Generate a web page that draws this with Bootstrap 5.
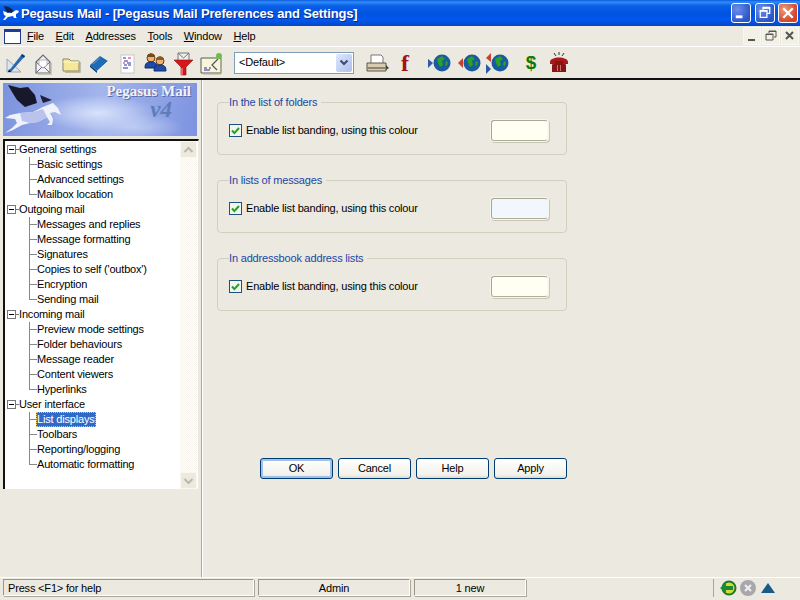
<!DOCTYPE html>
<html lang="en">
<head>
  <meta charset="UTF-8">
  <title>Pegasus Mail - [Pegasus Mail Preferences and Settings]</title>
  <link href="https://cdn.jsdelivr.net/npm/bootstrap@5.3.0/dist/css/bootstrap.min.css" rel="stylesheet">
  <style>
    html, body { height: 100%; overflow: hidden; }
    body { font-family: "Liberation Sans", Arial, sans-serif; font-size: 11px; letter-spacing: -.18px; line-height: 15px; color: #000; background: #ece9e0; }
    .app { width: 800px; height: 600px; }

    .titlebar { height: 26px; padding: 0 2px 0 2px; color: #fff; font-weight: 700; font-size: 13px; letter-spacing: -.15px;
      background: linear-gradient(#0a5be0 0, #2f8cf6 2px, #0a5fe8 6px, #0052e0 14px, #0058ee 20px, #0546c4 26px); }
    .titlebar .title { margin-left: 0; text-shadow: 1px 1px 0 #0a2a8c; }
    .win-btn { width: 20px; height: 20px; border: 1px solid #fff; border-radius: 3px; background: radial-gradient(circle at 30% 30%, #6c8fe8, #2a55c8 75%); }
    .win-btn.close { background: radial-gradient(circle at 30% 30%, #ec9a7a, #d5452a 70%); }

    .menubar { height: 21px; border-bottom: 1px solid #fff; }
    .menu-logo { width: 17px; height: 15px; margin: 0 6px 0 4px; background: #fff; border: 1px solid #1c3f94; border-top-width: 3px; }
    .menu-items { gap: 11.6px; }
    .mdi-btn { width: 18px; height: 18px; background: #f3f1e6; border: 1px solid #f8f7f0; }

    .toolbar { height: 33px; border-bottom: 2px solid #111; padding-left: 1px; }
    .tb { width: 28px; height: 26px; }
    .combo { width: 120px; height: 22px; background: #fff; border: 1px solid #7f9db9; margin: 0 9px; padding-left: 4px; }
    .combo-btn { width: 16px; height: 18px; margin: 1px; border-radius: 2px; background: linear-gradient(135deg, #dfe7fb, #aebfee); }
    .ms-globe { margin-left: 6px; }
    .ms-2px { margin-left: 2px; }

    .main { min-height: 0; }
    .sidebar { width: 202px; border-right: 1px solid #aca899; padding: 3px 0 0 3px; box-shadow: 1px 0 0 #fff; }
    .logo { position: relative; width: 194px; height: 53px; padding: 0 6px 0 0; overflow: hidden; text-align: right;
      font-family: "Liberation Serif", serif; font-weight: 700; letter-spacing: 0;
      background:
        radial-gradient(ellipse 60px 18px at 95px 30px, #d8e2fa, transparent),
        radial-gradient(ellipse 50px 14px at 130px 44px, #bccbf3, transparent),
        linear-gradient(100deg, #7b92de, #a3b5ec 50%, #7d93e0); }
    .logo .brand { color: #f1f2f6; font-size: 15px; line-height: 16px; text-shadow: 1px 1px 0 #5a6ba8; }
    .logo .ver { color: #5d7db8; font-size: 23px; line-height: 22px; font-style: italic; padding-right: 19px; }
    .logo svg { position: absolute; left: 0; top: 0; }

    .tree-box { width: 196px; height: 350px; margin-top: 3px; background: #fff; border-left: 2px solid #111; border-top: 2px solid #111; border-right: 1px solid #ece9e0; }
    .tree { padding: 1px 0 0 2px; }
    .tree ul { list-style: none; margin: 0; padding: 0; }
    .tree-row { height: 15px; white-space: nowrap; }
    .tree-group { display: flex; align-items: center; }
    .expander { width: 9px; height: 9px; border: 1px solid #777; position: relative; background: #fff; flex: none; }
    .expander::before { content: ""; position: absolute; left: 1px; right: 1px; top: 3px; height: 1px; background: #000; }
    .tree-stub { width: 3px; height: 1px; background: #777; flex: none; }
    .tree-children { margin-left: 4px !important; }
    .tree-children li { position: relative; padding-left: 26px; height: 15px; }
    .tree-children li::before { content: ""; position: absolute; left: 18px; top: 0; bottom: 0; border-left: 1px solid #888; }
    .tree-children li:last-child::before { bottom: 7px; }
    .tree-children li::after { content: ""; position: absolute; left: 18px; top: 7px; width: 8px; border-top: 1px solid #888; }
    .tree-children li span { display: inline-block; padding: 0 1px; height: 15px; margin-left: -1px; }
    .tree-children li .active { background: #316ac5; color: #fff; outline: 1px dotted #e8c860; outline-offset: -1px; }
    .scroll { width: 17px; margin: 0 1px 0 0; background: repeating-conic-gradient(#f6f4ec 0 25%, #fff 0 50%) 0 0 / 2px 2px; }
    .scroll-btn { height: 17px; background: #eceadf; border: 1px solid #f8f7f0; border-radius: 2px; }

    .content { padding: 15px 0 0 15px; width: 598px; }
    fieldset.group { width: 350px; height: 60px; border: 1px solid #d0d0bf; border-radius: 4px; padding: 0 18px 0 11px; margin: 0 0 18px 0; }
    fieldset.group legend { float: none; width: auto; font-size: 11px; line-height: 15px; color: #1a47a6; padding: 0 4px 0 0; margin: 0; }
    .group .body-row { margin-top: 10px; }
    .form-check-input.xp { width: 13px; height: 13px; margin: 0 4px 0 0; border: 1px solid #1c5180; border-radius: 0; flex: none;
      background-color: #f4f4ee; background-size: 11px 11px; opacity: 1; box-shadow: none;
      background-image: url("data:image/svg+xml,%3Csvg xmlns='http://www.w3.org/2000/svg' viewBox='0 0 11 11'%3E%3Cpath d='M2 5.5l2.4 2.6L9 3' fill='none' stroke='%2321a121' stroke-width='2'/%3E%3C/svg%3E"); }
    .swatch { width: 57px; height: 21px; margin-left: auto; border: 1px solid; border-color: #a8a796 #f8f7f0 #b0ae9c #a8a796; border-radius: 3px; box-shadow: 0 0 0 1px #f7f6ee, 1px 1px 0 1px #c8c6b4; }
    .swatch.cream { background: #fffff2; }
    .swatch.ice { background: #f2f6fd; }

    .actions { width: 307px; margin: 147px 0 0 43px; gap: 5px; }
    .btn.xp-btn { width: 73px; height: 21px; padding: 0; font-size: 11px; letter-spacing: -.18px; line-height: 19px; color: #000; border: 1px solid #003c74; border-radius: 3px; background: linear-gradient(#fff, #f2f1ea 85%, #dcd8c8); }
    .btn.xp-btn.default { box-shadow: inset 0 0 0 2px #a6bfe8; }

    .statusbar { height: 23px; border-top: 1px solid #fff; padding: 1px 0 0 3px; }
    .pane { height: 17px; line-height: 16px; border: 1px solid; border-color: #9a9788 #fff #fff #9a9788; padding: 0 4px; box-shadow: 1px 1px 0 #aca899; }
    .pane-help { width: 251px; }
    .pane-user { width: 152px; margin-left: 4px; text-align: center; }
    .pane-new { width: 112px; margin-left: 4px; text-align: center; }
    .tray { margin-left: 187px; border-left: 1px solid #aca899; height: 18px; padding-left: 5px; gap: 2px; }
  </style>
</head>
<body>
<div class="app d-flex flex-column">

  <div class="titlebar d-flex align-items-center">
    <svg width="19" height="17" viewBox="0 0 19 17"><path d="M1 6l5 2 5-1 3-2 3 1-1 2-2 1 0 3 1 1-3 0-1-2-5 1-3 3-2 0 3-4-2-1z" fill="#fff"/><path d="M2 1l5 1 4 3-1 3-5-1-2-3z" fill="#152244"/></svg>
    <div class="title">Pegasus Mail - [Pegasus Mail Preferences and Settings]</div>
    <div class="ms-auto d-flex" style="gap:3px">
      <div class="win-btn d-flex"><svg width="18" height="18" viewBox="0 0 19 19"><rect x="4" y="12" width="7" height="3" fill="#fff"/></svg></div>
      <div class="win-btn d-flex" style="margin-left:1px"><svg width="18" height="18" viewBox="0 0 19 19"><path d="M7.500 6V4h7v6h-2.500M4.500 7h7v7h-7z" fill="none" stroke="#fff" stroke-width="1.300"/><path d="M7 4h8M4 7.300h8" stroke="#fff" stroke-width="2"/></svg></div>
      <div class="win-btn close d-flex"><svg width="18" height="18" viewBox="0 0 19 19"><path d="M4.500 4.500l10 10M14.500 4.500l-10 10" stroke="#fff" stroke-width="2.400"/></svg></div>
    </div>
  </div>

  <div class="menubar d-flex align-items-center">
    <div class="menu-logo"></div>
    <div class="menu-items d-flex">
      <span><u>F</u>ile</span>
      <span><u>E</u>dit</span>
      <span><u>A</u>ddresses</span>
      <span><u>T</u>ools</span>
      <span><u>W</u>indow</span>
      <span><u>H</u>elp</span>
    </div>
    <div class="ms-auto d-flex" style="gap:1px;margin-right:1px">
      <div class="mdi-btn"><svg width="16" height="16" viewBox="0 0 16 16"><path d="M4 12h7" stroke="#555" stroke-width="2"/></svg></div>
      <div class="mdi-btn"><svg width="16" height="16" viewBox="0 0 16 16"><path d="M6 5V3h7v6h-2M3 6h7v6H3z" fill="none" stroke="#555"/><path d="M3 6.500h7M6 3.500h7" stroke="#555"/></svg></div>
      <div class="mdi-btn"><svg width="16" height="16" viewBox="0 0 16 16"><path d="M4 4l7 7M11 4l-7 7" stroke="#555" stroke-width="2"/></svg></div>
    </div>
  </div>

  <div class="toolbar d-flex align-items-center">
    <!-- compose -->
    <svg class="tb" viewBox="0 0 28 26"><path d="M6 9l14 13H6z" fill="#dfe4ee" stroke="#9aa4bc"/><path d="M7 22L21 4l3 2L10 22z" fill="#2a6ab0"/><path d="M7 22l3 0-2-3z" fill="#123"/><path d="M21 4l3 2-1 2-3-2z" fill="#113a6e"/></svg>
    <!-- read envelope -->
    <svg class="tb" viewBox="0 0 28 26"><path d="M7 12l7-7 7 7v11H7z" fill="#f2f2f4" stroke="#6a6a78" stroke-width="1.200"/><path d="M7 12l7 6 7-6M7 23l6-6M21 23l-6-6" fill="none" stroke="#6a6a78"/><path d="M10 10h8v5l-4 3-4-3z" fill="#fff" stroke="#9a9aa8" stroke-width=".7"/><path d="M22 13v11H9" fill="none" stroke="#bbb8a8" stroke-width="1.400"/></svg>
    <!-- folder -->
    <svg class="tb" viewBox="0 0 28 26"><path d="M6 9h6l2 2h8v10H6z" fill="#f5e89a" stroke="#8b8660"/><path d="M6 12h16" stroke="#fff7c8"/><path d="M23 12v10H8" fill="none" stroke="#a9a794" stroke-width="1.300"/></svg>
    <!-- address book -->
    <svg class="tb" viewBox="0 0 28 26"><path d="M5 15l10-9 8 5-11 10z" fill="#1f6ab4"/><path d="M5 15l7 6v2l-7-6z" fill="#0d3c78"/><path d="M12 21l11-10v2L12 23z" fill="#e8eef8"/><path d="M8 14l7-6" stroke="#5c9ade"/></svg>
    <!-- filter list -->
    <svg class="tb" viewBox="0 0 28 26"><rect x="8" y="5" width="13" height="18" fill="#fff" stroke="#c8c8c8"/><path d="M10 8h3M11 11h4M14 13h4M11 15h3M15 15h3M10 18h5" stroke="#2a2aa8"/><path d="M15 8h3M10 13h2" stroke="#b02a8a"/></svg>
    <!-- people -->
    <svg class="tb" viewBox="0 0 28 26"><circle cx="10" cy="8" r="4" fill="#f0b070" stroke="#5a3a10"/><path d="M6 7c0-5 8-5 8 0z" fill="#7a4a12"/><path d="M4 18c0-5 2-6 6-6s6 1 6 6z" fill="#1f4aa8" stroke="#102c70"/><circle cx="19" cy="11" r="4" fill="#f0b070" stroke="#5a3a10"/><path d="M15 10c0-5 8-5 8 0z" fill="#8a5a20"/><path d="M13 21c0-5 2-6 6-6s6 1 6 6z" fill="#1f4aa8" stroke="#102c70"/></svg>
    <!-- funnel -->
    <svg class="tb" viewBox="0 0 28 26"><path d="M9 3h11v8H9z" fill="#eee" stroke="#777"/><path d="M9 3l5.500 5L20 3" fill="none" stroke="#777"/><path d="M5 10h19l-7 7v8h-5v-8z" fill="#d81818" stroke="#8a1010" stroke-width=".6"/><path d="M12 18h2v7h-2z" fill="#f06060"/></svg>
    <!-- rules -->
    <svg class="tb" viewBox="0 0 28 26"><path d="M4 8h20v15H4z" fill="#f7f5dc" stroke="#5c5c50"/><path d="M24 9v15H6" fill="none" stroke="#b0ae9c"/><path d="M7 18h3M12 18h2M7 20h6" stroke="#2a2a98"/><path d="M21 9l-6 6 5 5" fill="none" stroke="#555" stroke-width="1.200"/><circle cx="22" cy="6" r="3" fill="#6cc04a"/></svg>

    <div class="combo d-flex align-items-center">&lt;Default&gt;
      <div class="combo-btn ms-auto d-flex align-items-center justify-content-center"><svg width="10" height="8" viewBox="0 0 10 8"><path d="M1.500 1.500L5 5l3.500-3.500" fill="none" stroke="#3c4a78" stroke-width="2"/></svg></div>
    </div>

    <!-- printer -->
    <svg class="tb" viewBox="0 0 28 26"><path d="M8 5h10l2 2v7H8z" fill="#fff" stroke="#777"/><path d="M4 13h19v8H4z" fill="#d8ccb0" stroke="#5c5648"/><path d="M4 18h19" stroke="#8e866e" stroke-width="2"/><path d="M23 15l3 3-3 2z" fill="#444"/></svg>
    <!-- font f -->
    <svg class="tb" viewBox="0 0 28 26"><text x="14" y="21" text-anchor="middle" font-family="Liberation Serif, serif" font-weight="700" font-size="24" fill="#a01414">f</text></svg>

    <svg class="tb ms-globe" viewBox="0 0 28 26"><path d="M3 9l5 4-5 5z" fill="#2c5aa8"/><circle cx="17" cy="13" r="8.500" fill="#1a5a9e"/><path d="M12 9l5-3 3 3-3 2 1 4-3 2-2-4zM21 11l2 1-1 4-2-1z" fill="#2ba02b"/></svg>
    <svg class="tb ms-2px" viewBox="0 0 28 26"><path d="M8 8l-5 5 5 5z" fill="#c84030"/><circle cx="17" cy="13" r="8.500" fill="#1a5a9e"/><path d="M12 9l5-3 3 3-3 2 1 4-3 2-2-4zM21 11l2 1-1 4-2-1z" fill="#2ba02b"/></svg>
    <svg class="tb" viewBox="0 0 28 26"><path d="M8 3l-5 5 5 4z" fill="#c84030"/><path d="M3 14l5 5-5 5z" fill="#2c5aa8"/><circle cx="17" cy="13" r="8.500" fill="#1a5a9e"/><path d="M12 9l5-3 3 3-3 2 1 4-3 2-2-4zM21 11l2 1-1 4-2-1z" fill="#2ba02b"/></svg>

    <svg class="tb ms-globe" viewBox="0 0 28 26"><text x="14" y="19" text-anchor="middle" font-family="Liberation Sans, sans-serif" font-weight="700" font-size="19" fill="#0a7a0a">$</text></svg>
    <!-- phone -->
    <svg class="tb" viewBox="0 0 28 26"><path d="M7 15l3-5h8l3 5v7H7z" fill="#8a1414"/><path d="M5 12c0-6 18-6 18 0v2h-5v-3h-8v3H5z" fill="#a81a1a"/><path d="M12 16h1M15 16h1M12 18h1M15 18h1M12 20h1M15 20h1" stroke="#f0d8d8"/><path d="M14 2v3M9 3l2 3M19 3l-2 3" stroke="#333"/></svg>
  </div>

  <div class="main d-flex flex-grow-1">
    <div class="sidebar">
      <div class="logo">
        <svg width="62" height="53" viewBox="0 0 62 53">
          <path d="M37 12l12 5-9 3z" fill="#20203a"/>
          <path d="M58 32l-3-7-5-5-10 4-10 5-13 1-10 2-5 3 10 1 2 4-5 5-7 5 8-3 9-5 8-2 8-1 9-5 3 5-3 3h5l1-6-3-6 5-1z" fill="#f0f2fb"/>
          <path d="M17 30l13-1 10-3 4 8-9 5-8 1-8-2z" fill="#b9c3ec"/>
          <path d="M5 2l12 3 8-1 7 8 2 8-12 4-8-7-5-8z" fill="#18182c"/>
        </svg>
        <div class="brand">Pegasus Mail</div>
        <div class="ver">v4</div>
      </div>
      <div class="tree-box d-flex">
        <div class="tree flex-grow-1">
          <ul>
            <li>
              <div class="tree-row tree-group"><span class="expander"></span><span class="tree-stub"></span>General settings</div>
              <ul class="tree-children">
                <li><span>Basic settings</span></li>
                <li><span>Advanced settings</span></li>
                <li><span>Mailbox location</span></li>
              </ul>
            </li>
            <li>
              <div class="tree-row tree-group"><span class="expander"></span><span class="tree-stub"></span>Outgoing mail</div>
              <ul class="tree-children">
                <li><span>Messages and replies</span></li>
                <li><span>Message formatting</span></li>
                <li><span>Signatures</span></li>
                <li><span>Copies to self ('outbox')</span></li>
                <li><span>Encryption</span></li>
                <li><span>Sending mail</span></li>
              </ul>
            </li>
            <li>
              <div class="tree-row tree-group"><span class="expander"></span><span class="tree-stub"></span>Incoming mail</div>
              <ul class="tree-children">
                <li><span>Preview mode settings</span></li>
                <li><span>Folder behaviours</span></li>
                <li><span>Message reader</span></li>
                <li><span>Content viewers</span></li>
                <li><span>Hyperlinks</span></li>
              </ul>
            </li>
            <li>
              <div class="tree-row tree-group"><span class="expander"></span><span class="tree-stub"></span>User interface</div>
              <ul class="tree-children">
                <li><span class="active">List displays</span></li>
                <li><span>Toolbars</span></li>
                <li><span>Reporting/logging</span></li>
                <li><span>Automatic formatting</span></li>
              </ul>
            </li>
          </ul>
        </div>
        <div class="scroll d-flex flex-column justify-content-between">
          <div class="scroll-btn d-flex align-items-center justify-content-center"><svg width="11" height="8" viewBox="0 0 11 8"><path d="M1.500 6l4-4 4 4" fill="none" stroke="#b9b8ac" stroke-width="2"/></svg></div>
          <div class="scroll-btn d-flex align-items-center justify-content-center"><svg width="11" height="8" viewBox="0 0 11 8"><path d="M1.500 2l4 4 4-4" fill="none" stroke="#b9b8ac" stroke-width="2"/></svg></div>
        </div>
      </div>
    </div>

    <div class="content">
      <fieldset class="group">
        <legend>In the list of folders</legend>
        <div class="body-row d-flex align-items-center">
          <input class="form-check-input xp" type="checkbox" id="bandFolders" checked>
          <label class="form-check-label" for="bandFolders">Enable list banding, using this colour</label>
          <div class="swatch cream"></div>
        </div>
      </fieldset>
      <fieldset class="group">
        <legend>In lists of messages</legend>
        <div class="body-row d-flex align-items-center">
          <input class="form-check-input xp" type="checkbox" id="bandMessages" checked>
          <label class="form-check-label" for="bandMessages">Enable list banding, using this colour</label>
          <div class="swatch ice"></div>
        </div>
      </fieldset>
      <fieldset class="group">
        <legend>In addressbook address lists</legend>
        <div class="body-row d-flex align-items-center">
          <input class="form-check-input xp" type="checkbox" id="bandAddresses" checked>
          <label class="form-check-label" for="bandAddresses">Enable list banding, using this colour</label>
          <div class="swatch cream"></div>
        </div>
      </fieldset>
      <div class="actions d-flex">
        <button type="button" class="btn xp-btn default">OK</button>
        <button type="button" class="btn xp-btn">Cancel</button>
        <button type="button" class="btn xp-btn">Help</button>
        <button type="button" class="btn xp-btn">Apply</button>
      </div>
    </div>
  </div>

  <div class="statusbar d-flex">
    <div class="pane pane-help">Press &lt;F1&gt; for help</div>
    <div class="pane pane-user">Admin</div>
    <div class="pane pane-new">1 new</div>
    <div class="tray d-flex align-items-center">
      <svg width="18" height="16" viewBox="0 0 18 16"><circle cx="10" cy="8" r="6.500" fill="#d8d838" stroke="#1a7a2a" stroke-width="2"/><path d="M1 8l6-5v3h7v4H7v3z" fill="#1a8a3a"/></svg>
      <svg width="18" height="18" viewBox="0 0 18 18"><circle cx="9" cy="9" r="8" fill="#a8a8ac"/><path d="M6 6l6 6M12 6l-6 6" stroke="#f0f0f0" stroke-width="2"/></svg>
      <svg width="18" height="14" viewBox="0 0 18 14"><path d="M9 2l7 10H2z" fill="#1a5a88"/></svg>
    </div>
  </div>
</div>
<script src="https://cdn.jsdelivr.net/npm/bootstrap@5.3.0/dist/js/bootstrap.bundle.min.js"></script>
</body>
</html>
